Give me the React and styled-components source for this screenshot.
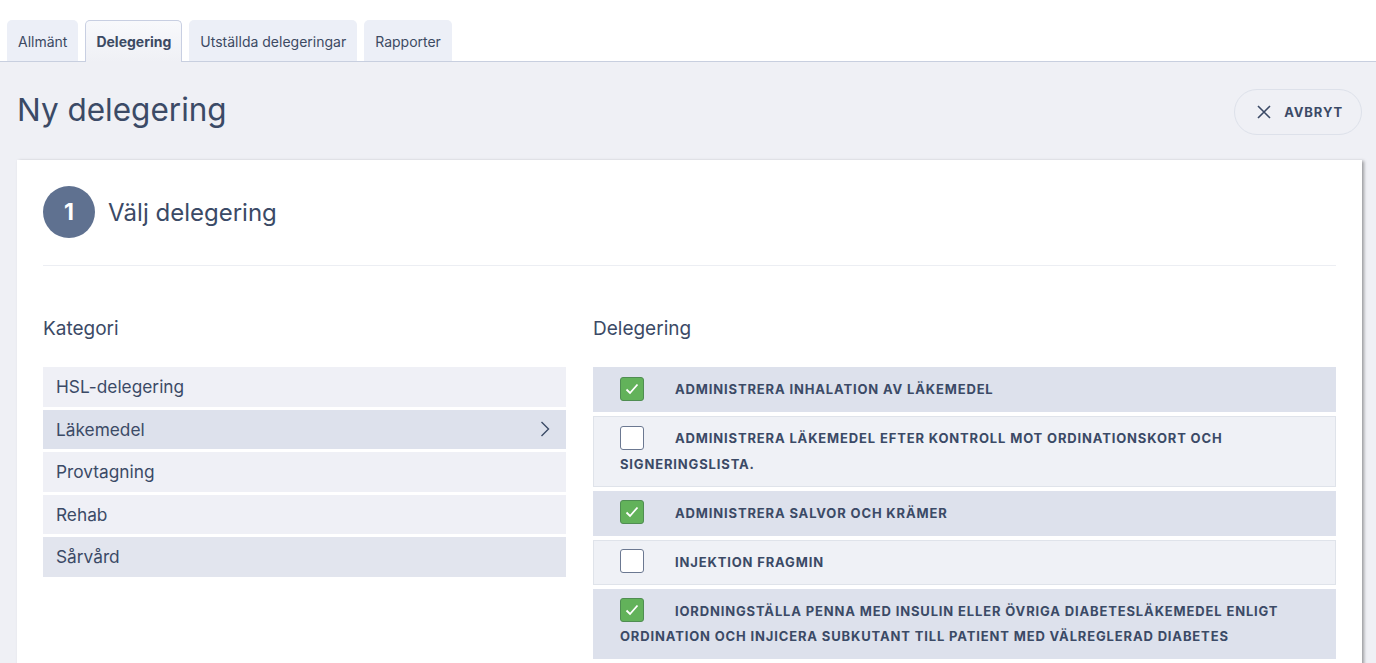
import React from 'react';
import styled, { createGlobalStyle } from 'styled-components';

const GlobalStyle = createGlobalStyle`
  html, body {
    margin: 0;
    padding: 0;
    background: #eff0f5;
    font-family: Inter, "Noto Sans", "Liberation Sans", sans-serif;
    color: #3b4a66;
  }
  * { box-sizing: border-box; }
`;

const categories = [
  { name: 'HSL-delegering', tone: 'light' },
  { name: 'Läkemedel', tone: 'active' },
  { name: 'Provtagning', tone: 'light' },
  { name: 'Rehab', tone: 'light' },
  { name: 'Sårvård', tone: 'mid' },
];

const delegations = [
  { text: 'Administrera inhalation av läkemedel', checked: true },
  { text: 'Administrera läkemedel efter kontroll mot ordinationskort och signeringslista.', checked: false },
  { text: 'Administrera salvor och krämer', checked: true },
  { text: 'Injektion Fragmin', checked: false },
  { text: 'Iordningställa penna med insulin eller övriga diabetesläkemedel enligt ordination och injicera subkutant till patient med välreglerad diabetes', checked: true },
];

const tabs = ['Allmänt', 'Delegering', 'Utställda delegeringar', 'Rapporter'];

const App = () => {
  return (
    <>
      <GlobalStyle />
      <TabBar>
        {tabs.map((t) => (
          <Tab key={t} active={t === 'Delegering'}>
            {t}
          </Tab>
        ))}
      </TabBar>
      <Page>
        <Header>
          <Title>Ny delegering</Title>
          <CancelButton>
            <svg width='14' height='14' viewBox='0 0 14 14'>
              <path d='M1 1L13 13M13 1L1 13' stroke='#3b4a66' strokeWidth='1.6' fill='none' />
            </svg>
            Avbryt
          </CancelButton>
        </Header>
        <Card>
          <StepHeader>
            <StepNumber>1</StepNumber>
            <StepTitle>Välj delegering</StepTitle>
          </StepHeader>
          <Columns>
            <div>
              <ColumnTitle>Kategori</ColumnTitle>
              <List>
                {categories.map((c) => (
                  <CategoryRow key={c.name} tone={c.tone}>
                    {c.name}
                    {c.tone === 'active' && (
                      <svg width='10' height='16' viewBox='0 0 10 16'>
                        <path d='M1.5 1L8.5 8L1.5 15' stroke='#3b4a66' strokeWidth='1.4' fill='none' />
                      </svg>
                    )}
                  </CategoryRow>
                ))}
              </List>
            </div>
            <div>
              <ColumnTitle>Delegering</ColumnTitle>
              <List gap='4px'>
                {delegations.map((d) => (
                  <DelegationRow key={d.text} checked={d.checked}>
                    <Checkbox checked={d.checked}>
                      {d.checked && (
                        <svg width='14' height='12' viewBox='0 0 14 12'>
                          <path d='M1.5 6.5L5 10L12.5 1.5' stroke='#fff' strokeWidth='1.8' fill='none' />
                        </svg>
                      )}
                    </Checkbox>
                    {d.text}
                  </DelegationRow>
                ))}
              </List>
            </div>
          </Columns>
        </Card>
      </Page>
    </>
  );
};

export default App;

const TabBar = styled.nav`
  display: flex;
  gap: 7px;
  padding: 20px 0 0 7px;
  height: 62px;
  background: #fff;
  border-bottom: 1px solid #c8cfdf;
`;

const Tab = styled.div`
  height: ${({ active }) => (active ? '42px' : '41px')};
  margin-bottom: ${({ active }) => (active ? '-1px' : '0')};
  padding: 0 10px;
  display: flex;
  align-items: center;
  font-size: 14px;
  font-weight: ${({ active }) => (active ? 700 : 400)};
  color: #3c4a63;
  background: ${({ active }) => (active ? 'linear-gradient(#f8f9fc, #eff0f5)' : '#eceff7')};
  border: 1px solid ${({ active }) => (active ? '#c8cfe2' : 'transparent')};
  border-bottom: none;
  border-radius: 5px 5px 0 0;
`;

const Page = styled.main`
  padding: 0 14px 0 17px;
`;

const Header = styled.header`
  display: flex;
  align-items: center;
  justify-content: space-between;
  height: 98px;
`;

const Title = styled.h1`
  margin: -3px 0 0;
  font-size: 31.5px;
  font-weight: 400;
  color: #3b4a66;
`;

const CancelButton = styled.button`
  display: flex;
  align-items: center;
  gap: 13px;
  height: 46px;
  padding: 0 18px 0 22px;
  margin-top: 2px;
  border: 1px solid #dde1ea;
  border-radius: 23px;
  background: transparent;
  font-family: inherit;
  font-size: 13px;
  font-weight: 700;
  letter-spacing: 0.9px;
  text-transform: uppercase;
  color: #3b4a66;
`;

const Card = styled.section`
  background: #fff;
  box-shadow: 2px 1px 3px rgba(0, 0, 0, 0.35);
  padding: 26px 26px 40px;
  min-height: 500px;
`;

const StepHeader = styled.div`
  display: flex;
  align-items: center;
  gap: 13px;
  padding-bottom: 27px;
  border-bottom: 1px solid #eceef3;
`;

const StepNumber = styled.div`
  width: 52px;
  height: 52px;
  border-radius: 50%;
  background: #5f7190;
  color: #fff;
  font-size: 23px;
  font-weight: 700;
  display: flex;
  align-items: center;
  justify-content: center;
`;

const StepTitle = styled.h2`
  margin: 0;
  font-size: 24px;
  font-weight: 400;
  color: #3b4a66;
`;

const Columns = styled.div`
  display: grid;
  grid-template-columns: 523px 1fr;
  gap: 27px;
  padding-top: 50px;
`;

const ColumnTitle = styled.h3`
  margin: 0 0 25px;
  font-size: 19px;
  font-weight: 400;
  line-height: 26px;
  color: #3b4a66;
`;

const List = styled.div`
  display: flex;
  flex-direction: column;
  gap: ${({ gap }) => gap || '3px'};
`;

const toneColors = {
  light: '#eff0f6',
  active: '#dde1ec',
  mid: '#e2e5ee',
};

const CategoryRow = styled.div`
  height: 39.5px;
  display: flex;
  align-items: center;
  justify-content: space-between;
  padding: 0 16px 0 13px;
  background: ${({ tone }) => toneColors[tone]};
  font-size: 17.3px;
  color: #3b4a66;
`;

const DelegationRow = styled.div`
  padding: 9px 26px 8.5px 26px;
  background: ${({ checked }) => (checked ? '#dde1ec' : '#eff1f6')};
  border: 1px solid ${({ checked }) => (checked ? '#dde1ec' : '#dfe3ea')};
  font-size: 13px;
  font-weight: 700;
  letter-spacing: 0.85px;
  line-height: 25.5px;
  text-transform: uppercase;
  color: #3b4a66;
`;

const Checkbox = styled.span`
  display: inline-flex;
  align-items: center;
  justify-content: center;
  vertical-align: middle;
  width: 24px;
  height: 24px;
  margin: -3px 31px 0 0;
  border-radius: 3px;
  background: ${({ checked }) => (checked ? '#62b25a' : '#fff')};
  border: 1px solid ${({ checked }) => (checked ? '#4f8d52' : '#6b7891')};
`;
